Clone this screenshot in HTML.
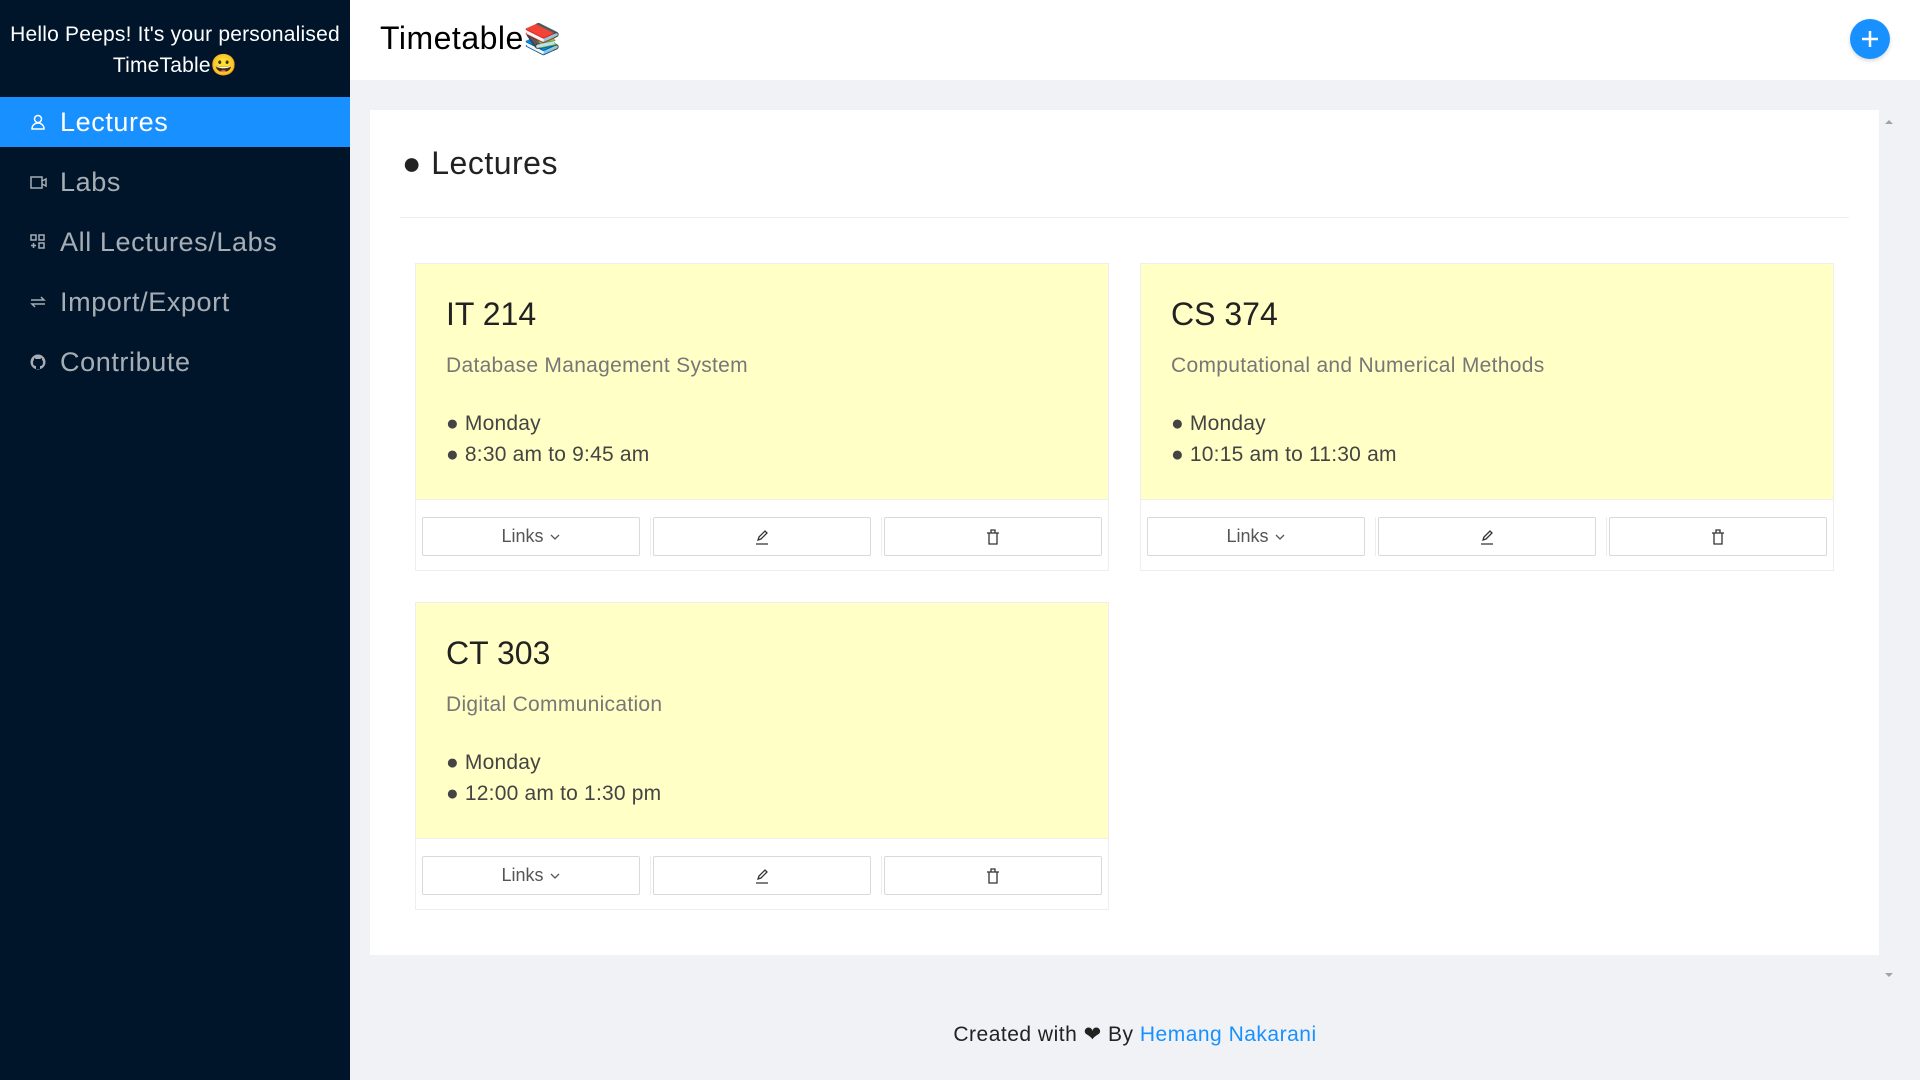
<!DOCTYPE html>
<html><head><meta charset="utf-8"><style>
*{box-sizing:border-box;margin:0;padding:0}
body{width:1920px;height:1080px;position:relative;background:#f0f2f5;font-family:"Liberation Sans",sans-serif;overflow:hidden}
.side{position:absolute;left:0;top:0;width:350px;height:1080px;background:#001529}
.greet{position:absolute;left:0;top:19px;width:350px;text-align:center;color:#fff;font-size:21px;line-height:31px;letter-spacing:.2px}
.item{position:absolute;left:0;width:350px;height:50px;color:rgba(255,255,255,.65);font-size:27px;line-height:50px;padding-left:60px;letter-spacing:.6px}
.item svg{position:absolute;left:30px;top:17px}
.item.act{background:#1890ff;color:#fff}
.hdr{position:absolute;left:350px;top:0;width:1570px;height:80px;background:#fff}
.title{position:absolute;left:30px;top:20px;font-size:32px;color:#000;letter-spacing:.5px}
.plus{position:absolute;left:1500px;top:19px;width:40px;height:40px;border-radius:50%;background:#1890ff;box-shadow:0 2px 4px rgba(0,0,0,.15)}
.panel{position:absolute;left:370px;top:110px;width:1509px;height:845px;background:#fff}
.sb{position:absolute;left:1879px;top:110px;width:20px;height:880px}
.h2{position:absolute;left:32px;top:35px;font-size:32px;color:#222;letter-spacing:.5px}
.hr{position:absolute;left:30px;top:107px;width:1449px;height:1px;background:#eee}
.card{position:absolute;width:694px;height:308px;border:1px solid #eee;background:#fff}
.y{position:absolute;left:0;top:0;width:692px;height:236px;background:#ffffc6;border-bottom:1px solid #eee}
.ct{position:absolute;left:30px;top:32px;font-size:32px;color:#222}
.cs{position:absolute;left:30px;top:90px;font-size:21px;color:#777;letter-spacing:.3px}
.cl{position:absolute;left:30px;font-size:21px;color:#444;letter-spacing:.2px}
.btn{position:absolute;top:253px;width:218px;height:39px;border:1px solid #d9d9d9;border-radius:2px;background:#fff;text-align:center;line-height:37px;font-size:18px;color:#555}
.btn svg{vertical-align:middle}
.sep{position:absolute;top:253px;width:1px;height:39px;background:#eee}
.foot{position:absolute;left:350px;width:1570px;top:1022px;text-align:center;font-size:21px;color:#222;letter-spacing:.5px}
</style></head><body>
<div class="side">
<div class="greet">Hello Peeps! It's your personalised<br>TimeTable😀</div>
<div class="item act" style="top:97px"><svg width="16" height="16" viewBox="0 0 16 16" fill="none" stroke="#fff" stroke-width="1.5"><circle cx="8" cy="5" r="3.5"/><path d="M2 15c0-4 3-6 6-6s6 2 6 6z"/></svg>Lectures</div>
<div class="item" style="top:157px"><svg width="18" height="16" viewBox="0 0 18 16" fill="none" stroke="#a6adb4" stroke-width="1.5"><rect x="1" y="3" width="11" height="11"/><path d="M12 7l4-2v7l-4-2"/></svg>Labs</div>
<div class="item" style="top:217px"><svg width="16" height="16" viewBox="0 0 16 16" fill="none" stroke="#a6adb4" stroke-width="1.5"><rect x="1" y="1" width="5" height="5"/><rect x="9" y="1" width="5" height="5"/><rect x="9" y="9" width="5" height="5"/><path d="M3.5 9v5M1 11.5h5"/></svg>All Lectures/Labs</div>
<div class="item" style="top:277px"><svg width="16" height="16" viewBox="0 0 16 16" fill="none" stroke="#a6adb4" stroke-width="1.5"><path d="M1 6h13l-3-3M15 10H2l3 3"/></svg>Import/Export</div>
<div class="item" style="top:337px"><svg width="16" height="16" viewBox="0 0 16 16"><circle cx="8" cy="8" r="7.5" fill="#a6adb4"/><path d="M6 15v-3c-2 0-3-1-3-4 0-1 1-2 1-2V4l2 1h4l2-1v2s1 1 1 2c0 3-1 4-3 4v3z" fill="#001529"/></svg>Contribute</div>
</div>
<div class="hdr"><div class="title">Timetable<span style="font-size:30px">📚</span></div>
<div class="plus"><svg width="40" height="40"><path d="M20 12v16M12 20h16" stroke="#fff" stroke-width="2.5"/></svg></div></div>
<div class="panel">
<div class="h2">● Lectures</div><div class="hr"></div>
<div class="card" style="left:45px;top:153px"><div class="y"><div class="ct">IT 214</div><div class="cs">Database Management System</div><div class="cl" style="top:148px">● Monday</div><div class="cl" style="top:179px">● 8:30 am to 9:45 am</div></div>
<div class="btn" style="left:6px">Links <svg width="12" height="8" viewBox="0 0 12 8" fill="none" stroke="#555" stroke-width="1.3"><path d="M2 2l4 4 4-4"/></svg></div><div class="sep" style="left:234px"></div><div class="btn" style="left:237px"><svg width="16" height="16" viewBox="0 0 16 16" fill="none" stroke="#333" stroke-width="1.3"><path d="M4 11l1-3 6-6 2 2-6 6zM2 15h12"/></svg></div><div class="sep" style="left:465px"></div><div class="btn" style="left:468px"><svg width="14" height="16" viewBox="0 0 14 16" fill="none" stroke="#333" stroke-width="1.3"><path d="M1 4h12M5 4V1h4v3M3 4v11h8V4"/></svg></div></div>
<div class="card" style="left:770px;top:153px"><div class="y"><div class="ct">CS 374</div><div class="cs">Computational and Numerical Methods</div><div class="cl" style="top:148px">● Monday</div><div class="cl" style="top:179px">● 10:15 am to 11:30 am</div></div>
<div class="btn" style="left:6px">Links <svg width="12" height="8" viewBox="0 0 12 8" fill="none" stroke="#555" stroke-width="1.3"><path d="M2 2l4 4 4-4"/></svg></div><div class="sep" style="left:234px"></div><div class="btn" style="left:237px"><svg width="16" height="16" viewBox="0 0 16 16" fill="none" stroke="#333" stroke-width="1.3"><path d="M4 11l1-3 6-6 2 2-6 6zM2 15h12"/></svg></div><div class="sep" style="left:465px"></div><div class="btn" style="left:468px"><svg width="14" height="16" viewBox="0 0 14 16" fill="none" stroke="#333" stroke-width="1.3"><path d="M1 4h12M5 4V1h4v3M3 4v11h8V4"/></svg></div></div>
<div class="card" style="left:45px;top:492px"><div class="y"><div class="ct">CT 303</div><div class="cs">Digital Communication</div><div class="cl" style="top:148px">● Monday</div><div class="cl" style="top:179px">● 12:00 am to 1:30 pm</div></div>
<div class="btn" style="left:6px">Links <svg width="12" height="8" viewBox="0 0 12 8" fill="none" stroke="#555" stroke-width="1.3"><path d="M2 2l4 4 4-4"/></svg></div><div class="sep" style="left:234px"></div><div class="btn" style="left:237px"><svg width="16" height="16" viewBox="0 0 16 16" fill="none" stroke="#333" stroke-width="1.3"><path d="M4 11l1-3 6-6 2 2-6 6zM2 15h12"/></svg></div><div class="sep" style="left:465px"></div><div class="btn" style="left:468px"><svg width="14" height="16" viewBox="0 0 14 16" fill="none" stroke="#333" stroke-width="1.3"><path d="M1 4h12M5 4V1h4v3M3 4v11h8V4"/></svg></div></div>
</div>
<div class="sb"><svg width="20" height="880"><path d="M6 14l4-4 4 4z" fill="#a3a3a3"/><path d="M6 863l4 4 4-4z" fill="#a3a3a3"/></svg></div>
<div class="foot">Created with ❤ By <span style="color:#1890ff">Hemang Nakarani</span></div>
</body></html>
